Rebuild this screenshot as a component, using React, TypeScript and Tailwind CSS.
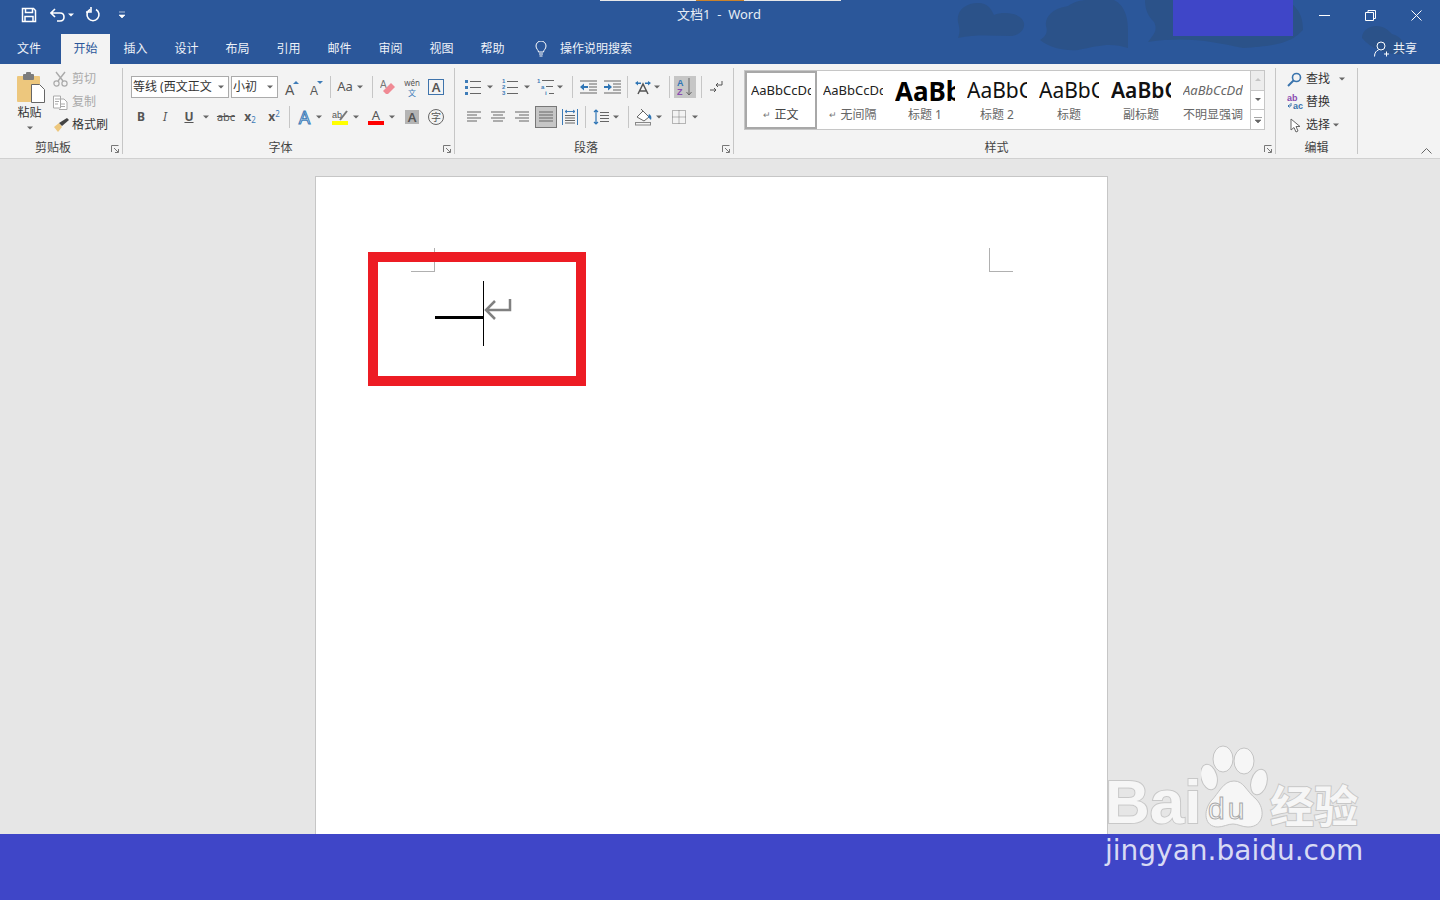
import type { ReactNode } from "react";

const BLUE = "#2b579a";

function Caret({ className = "", color = "#666" }: { className?: string; color?: string }) {
  return (
    <svg width="6" height="4" viewBox="0 0 6 4" className={`shrink-0 ${className}`}>
      <path d="M0 0.5h6L3 3.5z" fill={color} />
    </svg>
  );
}

function Sep({ className = "" }: { className?: string }) {
  return <div className={`h-[22px] w-px shrink-0 bg-[#c6c6c6] ${className}`} />;
}

function Slot({ children, className = "", w = "w-[24px]" }: { children: ReactNode; className?: string; w?: string }) {
  return <div className={`flex h-[22px] shrink-0 items-center justify-center ${w} ${className}`}>{children}</div>;
}

function Lines({ rows, w = 14 }: { rows: [number, number][]; w?: number }) {
  return (
    <svg width={w} height="13" viewBox={`0 0 ${w} 13`}>
      {rows.map(([x, len], i) => (
        <rect key={i} x={x} y={i * 3 + 0.5} width={len} height="1" fill="#666" />
      ))}
    </svg>
  );
}

function ListIcon({ kind }: { kind: "bullet" | "number" | "multi" }) {
  return (
    <svg width="18" height="20" viewBox="0 0 18 20">
      {kind === "bullet" && (
        <g fill="#3e7cb8">
          <rect x="1" y="3" width="3" height="3" />
          <rect x="1" y="9" width="3" height="3" />
          <rect x="1" y="15" width="3" height="3" />
        </g>
      )}
      {kind === "number" && (
        <g fill="#3e7cb8" fontSize="6" fontFamily="Liberation Sans, sans-serif" fontWeight="700">
          <text x="1" y="6">1</text>
          <text x="1" y="12">2</text>
          <text x="1" y="18">3</text>
        </g>
      )}
      {kind === "multi" && (
        <g fill="#3e7cb8" fontSize="6" fontFamily="Liberation Sans, sans-serif" fontWeight="700">
          <text x="0" y="6">1</text>
          <text x="4" y="12">a</text>
          <text x="8" y="18">i</text>
        </g>
      )}
      {kind === "multi" ? (
        <g fill="#666">
          <rect x="5" y="3" width="12" height="1" />
          <rect x="9" y="9" width="7" height="1" />
          <rect x="12" y="16" width="5" height="1" />
        </g>
      ) : (
        <g fill="#666">
          <rect x="6" y="4" width="11" height="1" />
          <rect x="6" y="10" width="11" height="1" />
          <rect x="6" y="16" width="11" height="1" />
        </g>
      )}
    </svg>
  );
}

function IndentIcon({ dir }: { dir: "out" | "in" }) {
  return (
    <svg width="17" height="14" viewBox="0 0 17 14">
      <g fill="#666">
        <rect x="0" y="0.5" width="17" height="1" />
        <rect x="9" y="3.5" width="8" height="1" />
        <rect x="9" y="6.5" width="8" height="1" />
        <rect x="9" y="9.5" width="8" height="1" />
        <rect x="0" y="12.5" width="17" height="1" />
      </g>
      <path d={dir === "out" ? "M0 7l4-3.5V6h4v2H4v2.5z" : "M8 7L4 3.5V6H0v2h4v2.5z"} fill="#2f75b5" />
    </svg>
  );
}

function Launcher() {
  return (
    <svg width="8" height="8" viewBox="0 0 8 8" className="absolute bottom-[1px] right-[3px]">
      <path d="M0.5 7V0.5H7.5M3 3l4 4M4 7.5h3.5V4" fill="none" stroke="#777" strokeWidth="1" />
    </svg>
  );
}

function Group({
  label,
  className,
  labelClass = "pr-[16px]",
  launcher = true,
  children,
}: {
  label: string;
  className: string;
  labelClass?: string;
  launcher?: boolean;
  children: ReactNode;
}) {
  return (
    <div className={`relative flex h-[86px] shrink-0 flex-col border-r border-[#c6c6c6] ${className}`}>
      <div className="h-[73px]">{children}</div>
      <div className={`h-[13px] text-center text-[12px] leading-[14px] text-[#444] ${labelClass}`}>{label}</div>
      {launcher && <Launcher />}
    </div>
  );
}

function Row({ children, className = "" }: { children: ReactNode; className?: string }) {
  return <div className={`flex h-[22px] items-center ${className}`}>{children}</div>;
}

function ClipboardGroup() {
  return (
    <Group label="剪贴板" className="w-[123px]">
      <div className="flex">
        <div className="ml-[15px] flex w-[29px] flex-col items-center">
          <svg width="29" height="31" viewBox="0 0 29 31" className="mt-[4px] translate-x-[1px]">
            <rect x="1" y="4" width="23" height="26" rx="1" fill="#edc77d" />
            <rect x="7" y="2" width="11" height="6" rx="1" fill="#7c7c7c" />
            <rect x="10" y="0" width="5" height="4" rx="1" fill="#7c7c7c" />
            <path d="M15.5 12.5h8l5 5v13h-13z" fill="#fff" stroke="#666" />
          </svg>
          <div className="mt-[2px] text-[12px] leading-[16px] text-[#333]">粘贴</div>
          <Caret className="mt-[5px]" />
        </div>
        <div className="ml-[9px] mt-[1px] flex flex-col gap-[3px] text-[12px] leading-[20px]">
          <div className="flex h-[20px] items-center text-[#aaa]">
            <svg width="15" height="16" viewBox="0 0 15 16" className="mr-[4px]">
              <path d="M3 1l7 9M12 1L5 10" stroke="#aaa" strokeWidth="1.4" fill="none" />
              <circle cx="3.5" cy="12.5" r="2.6" fill="none" stroke="#aaa" strokeWidth="1.2" />
              <circle cx="11.5" cy="12.5" r="2.6" fill="none" stroke="#aaa" strokeWidth="1.2" />
            </svg>
            剪切
          </div>
          <div className="flex h-[20px] items-center text-[#aaa]">
            <svg width="15" height="15" viewBox="0 0 15 15" className="mr-[4px]">
              <path d="M0.500 1h7v12h-7zM6 4h5l3 3v7.500H6" fill="#fff" stroke="#aaa" />
              <path d="M2 4h4M2 6.500h4M2 9h3M8 9h4M8 11.500h4" stroke="#aaa" />
            </svg>
            复制
          </div>
          <div className="flex h-[20px] items-center text-[#333]">
            <svg width="16" height="14" viewBox="0 0 16 14" className="mr-[3px]">
              <path d="M1 9l5-4 3 4-4 5z" fill="#edc77d" />
              <path d="M6 5l8-5 2 2-7 6z" fill="#444" />
            </svg>
            格式刷
          </div>
        </div>
      </div>
    </Group>
  );
}

function FontSelect({ className, text }: { className: string; text: string }) {
  return (
    <div className={`flex h-[22px] shrink-0 items-center justify-between border border-[#ababab] bg-white pl-[1px] pr-[4px] text-[12px] text-[#333] ${className}`}>
      <span className="whitespace-nowrap">{text}</span>
      <Caret className="ml-[2px]" />
    </div>
  );
}

function FontGroup() {
  return (
    <Group label="字体" className="w-[332px]">
      <Row className="mt-[8px] pl-[8px]">
        <FontSelect className="w-[98px]" text="等线 (西文正文" />
        <FontSelect className="ml-[2px] w-[47px]" text="小初" />
        <Slot className="ml-[2px]">
          <svg width="16" height="21" viewBox="0 0 16 21">
            <text x="1" y="18" fontSize="14" fill="#555" fontFamily="Liberation Sans, sans-serif">A</text>
            <path d="M9 7l3-3 3 3z" fill="#3e7cb8" />
          </svg>
        </Slot>
        <Slot>
          <svg width="16" height="21" viewBox="0 0 16 21">
            <text x="2" y="18" fontSize="12" fill="#555" fontFamily="Liberation Sans, sans-serif">A</text>
            <path d="M9 4h6l-3 3z" fill="#3e7cb8" />
          </svg>
        </Slot>
        <Sep className="ml-[2px]" />
        <Slot className="ml-[3px]" w="w-[22px]">
          <span className="text-[13px] text-[#555]">Aa</span>
        </Slot>
        <Caret className="ml-[1px]" />
        <Sep className="ml-[9px]" />
        <Slot className="ml-[3px]">
          <svg width="16" height="17" viewBox="0 0 16 17">
            <text x="0" y="9" fontSize="10" fill="#777" fontFamily="Liberation Sans, sans-serif">A</text>
            <path d="M3 12l8-8 4 4-7 7H6z" fill="#f08a94" />
          </svg>
        </Slot>
        <Slot>
          <div className="flex flex-col items-center gap-[1px]">
            <span className="text-[8px] leading-[9px] text-[#555]">wén</span>
            <span className="text-[8px] leading-[9px] text-[#3e7cb8]">文</span>
          </div>
        </Slot>
        <Slot>
          <div className="flex h-[16px] w-[16px] items-center justify-center border border-[#3f74ac] text-[13px] font-semibold leading-none text-[#555]">A</div>
        </Slot>
      </Row>
      <Row className="mt-[8px] pl-[6px]">
        <Slot><span className="text-[12px] font-bold text-[#555]">B</span></Slot>
        <Slot><span className="text-[12px] italic text-[#555]">I</span></Slot>
        <Slot><span className="text-[12px] font-bold leading-[12px] text-[#555] underline">U</span></Slot>
        <Caret className="ml-[2px]" />
        <Slot className="ml-[5px]">
          <span className="text-[11px] text-[#555] line-through">abc</span>
        </Slot>
        <Slot>
          <span className="text-[12px] font-bold text-[#555]">x<sub className="text-[8px] font-normal text-[#3e7cb8]">2</sub></span>
        </Slot>
        <Slot>
          <span className="text-[12px] font-bold text-[#555]">x<sup className="text-[8px] font-normal text-[#3e7cb8]">2</sup></span>
        </Slot>
        <Sep className="ml-[3px]" />
        <Slot className="ml-[3px]" w="w-[23px]">
          <span className="text-[18px] leading-none text-[#d6e6f5] [-webkit-text-stroke:1px_#3e7cb8]">A</span>
        </Slot>
        <Caret />
        <Slot className="ml-[6px]">
          <div className="flex flex-col items-center">
            <svg width="16" height="12" viewBox="0 0 16 12">
              <text x="0" y="9" fontSize="9" fill="#555" fontFamily="Liberation Sans, sans-serif">ab</text>
              <path d="M8 11l7-9" stroke="#777" strokeWidth="2" />
            </svg>
            <div className="h-[4px] w-[16px] bg-[#ffff00]" />
          </div>
        </Slot>
        <Caret className="ml-[1px]" />
        <Slot className="ml-[5px]">
          <div className="flex flex-col items-center">
            <span className="h-[12px] text-[13px] leading-[12px] text-[#555]">A</span>
            <div className="h-[4px] w-[16px] bg-[#ff0000]" />
          </div>
        </Slot>
        <Caret className="ml-[1px]" />
        <Slot className="ml-[5px]">
          <div className="flex h-[14px] w-[14px] items-center justify-center bg-[#b4b4b4] text-[13px] font-semibold leading-none text-[#555]">A</div>
        </Slot>
        <Slot>
          <div className="flex h-[16px] w-[16px] items-center justify-center rounded-full border border-[#666] text-[10px] leading-none text-[#555]">字</div>
        </Slot>
      </Row>
    </Group>
  );
}

function ParagraphGroup() {
  return (
    <Group label="段落" className="w-[279px]">
      <Row className="mt-[8px] pl-[6px]">
        <Slot><ListIcon kind="bullet" /></Slot>
        <Caret className="ml-[2px]" />
        <Slot className="ml-[5px]"><ListIcon kind="number" /></Slot>
        <Caret className="ml-[2px]" />
        <Slot className="ml-[4px]" w="w-[23px]"><ListIcon kind="multi" /></Slot>
        <Caret />
        <Sep className="ml-[9px]" />
        <Slot className="ml-[3px]"><IndentIcon dir="out" /></Slot>
        <Slot><IndentIcon dir="in" /></Slot>
        <Sep className="ml-[3px]" />
        <Slot className="ml-[3px]" w="w-[23px]">
          <svg width="16" height="15" viewBox="0 0 16 15">
            <path d="M0 3l3-2v1.500h3v1.500H3v1.500zM16 3l-3-2v1.500h-3v1.500h3v1.500z" fill="#2f75b5" />
            <path d="M3 14L8 4l5 10M5 11h6" fill="none" stroke="#555" strokeWidth="1.500" />
          </svg>
        </Slot>
        <Caret />
        <Sep className="ml-[9px]" />
        <Slot className="ml-[4px] bg-[#c6c6c6]" w="w-[22px]">
          <svg width="16" height="20" viewBox="0 0 16 20">
            <text x="0" y="9" fontSize="9" fontWeight="700" fill="#2f75b5" fontFamily="Liberation Sans, sans-serif">A</text>
            <text x="0" y="18" fontSize="9" fontWeight="700" fill="#8a4bb0" fontFamily="Liberation Sans, sans-serif">Z</text>
            <path d="M12 1v17M9.500 15l2.500 3 2.500-3" fill="none" stroke="#666" />
          </svg>
        </Slot>
        <Sep className="ml-[5px]" />
        <Slot className="ml-[2px]">
          <svg width="14" height="14" viewBox="0 0 14 14">
            <path d="M13 1v4H7M9 3L7 5l2 2" fill="none" stroke="#555" />
            <path d="M1 10h6M5 8l2 2-2 2" fill="none" stroke="#555" />
          </svg>
        </Slot>
      </Row>
      <Row className="mt-[8px] pl-[7px]">
        <Slot><Lines rows={[[0, 14], [0, 10], [0, 14], [0, 10]]} /></Slot>
        <Slot><Lines rows={[[0, 14], [2, 10], [0, 14], [2, 10]]} /></Slot>
        <Slot><Lines rows={[[0, 14], [4, 10], [0, 14], [4, 10]]} /></Slot>
        <Slot className="ml-px border border-[#777] bg-[#c6c6c6]" w="w-[22px]">
          <Lines rows={[[0, 14], [0, 14], [0, 14], [0, 14]]} />
        </Slot>
        <Slot className="ml-px">
          <svg width="16" height="16" viewBox="0 0 16 16">
            <path d="M0.500 0v16M15.500 0v16" stroke="#3e7cb8" />
            <path d="M3 2.500h10M3 2.500l2-1.500M3 2.500l2 1.500M13 2.500l-2-1.500M13 2.500l-2 1.500" stroke="#3e7cb8" fill="none" />
            <path d="M3 6.500h10M3 9h10M3 11.500h10M3 14h10" stroke="#666" />
          </svg>
        </Slot>
        <Sep className="ml-[3px]" />
        <Slot className="ml-[3px]">
          <svg width="16" height="16" viewBox="0 0 16 16">
            <path d="M3 1v14M1 3l2-2 2 2M1 13l2 2 2-2" fill="none" stroke="#2f75b5" strokeWidth="1.200" />
            <path d="M7 3.500h9M7 6.500h9M7 9.500h9M7 12.500h9" stroke="#666" />
          </svg>
        </Slot>
        <Caret />
        <Sep className="ml-[9px]" />
        <Slot className="ml-[3px]">
          <svg width="18" height="18" viewBox="0 0 18 18">
            <path d="M2 9l6-6 6 6-5 4z" fill="#fff" stroke="#666" />
            <path d="M6 1l2 2" stroke="#666" />
            <path d="M14 6c2 1 3 3 2 6-1-1-2-2-3-3z" fill="#2f75b5" />
            <rect x="0.500" y="14.500" width="15" height="2.500" fill="#f3f3f3" stroke="#888" />
          </svg>
        </Slot>
        <Caret />
        <Slot className="ml-[5px]">
          <svg width="14" height="14" viewBox="0 0 14 14">
            <path d="M0.500 0.500h13v13h-13zM7 0.500v13M0.500 7h13" fill="none" stroke="#777" strokeDasharray="1 1" />
          </svg>
        </Slot>
        <Caret className="ml-px" />
      </Row>
    </Group>
  );
}

function StyleCard({
  preview,
  label,
  selected = false,
  mark = false,
}: {
  preview: ReactNode;
  label: string;
  selected?: boolean;
  mark?: boolean;
}) {
  return (
    <div className={`flex h-[58px] w-[72px] shrink-0 flex-col items-center ${selected ? "border-2 border-[#a8a8a8]" : "border-2 border-transparent"}`}>
      <div className="flex h-[35px] w-[60px] items-center overflow-hidden whitespace-nowrap pt-[1px]">{preview}</div>
      <div className={`flex h-[14px] items-center text-[12px] ${selected ? "text-[#444]" : "text-[#666]"}`}>
        {mark && <span className="mr-[3px] text-[9px] text-[#777]">↵</span>}
        {label}
      </div>
    </div>
  );
}

function StylesGroup() {
  const scrollers = [
    <path key="up" d="M1 4h6L4 1z" fill="#c4c4c4" />,
    <path key="down" d="M1 1h6L4 4z" fill="#666" />,
    <path key="more" d="M0 0.500h8M1 3h6L4 6z" fill="#666" stroke="#666" strokeWidth="0.600" />,
  ];
  return (
    <Group label="样式" className="w-[542px]">
      <div className="ml-[10px] mt-[2px] flex h-[60px] w-[521px] border border-[#c6c6c6] bg-white">
        <StyleCard selected mark label="正文" preview={<span className="text-[13px] text-[#222]">AaBbCcDd</span>} />
        <StyleCard mark label="无间隔" preview={<span className="text-[13px] text-[#222]">AaBbCcDd</span>} />
        <StyleCard label="标题 1" preview={<span className="text-[26px] font-bold text-black">AaBbC</span>} />
        <StyleCard label="标题 2" preview={<span className="text-[21px] text-[#111]">AaBbC</span>} />
        <StyleCard label="标题" preview={<span className="text-[21px] text-[#111]">AaBbC</span>} />
        <StyleCard label="副标题" preview={<span className="text-[21px] font-semibold text-[#111]">AaBbC</span>} />
        <StyleCard label="不明显强调" preview={<span className="text-[13px] italic text-[#666]">AaBbCcDd</span>} />
        <div className="ml-auto flex w-[14px] flex-col border-l border-[#c6c6c6]">
          {scrollers.map((icon, i) => (
            <div
              key={i}
              className={`flex flex-1 items-center justify-center ${i < 2 ? "border-b border-[#c6c6c6]" : ""} ${i === 0 ? "bg-[#ededed]" : ""}`}
            >
              <svg width="8" height="6" viewBox="0 0 8 6">{icon}</svg>
            </div>
          ))}
        </div>
      </div>
    </Group>
  );
}

function EditGroup() {
  return (
    <Group label="编辑" className="w-[82px]" labelClass="" launcher={false}>
      <div className="ml-[11px] mt-[1px] flex flex-col gap-[3px] text-[12px] leading-[20px] text-[#333]">
        <div className="flex h-[20px] items-center">
          <svg width="15" height="15" viewBox="0 0 15 15" className="mr-[4px]">
            <circle cx="9.500" cy="5.500" r="4" fill="none" stroke="#3a74ad" strokeWidth="1.600" />
            <path d="M6.500 8.500L1 14" stroke="#3a74ad" strokeWidth="2" />
          </svg>
          查找
          <Caret className="ml-[9px]" />
        </div>
        <div className="flex h-[20px] items-center">
          <svg width="17" height="16" viewBox="0 0 17 16" className="mr-[2px]">
            <text x="0" y="7" fontSize="9" fontWeight="700" fill="#8a4bb0" fontFamily="Liberation Sans, sans-serif">ab</text>
            <text x="6" y="15" fontSize="9" fontWeight="700" fill="#3a74ad" fontFamily="Liberation Sans, sans-serif">ac</text>
            <path d="M4 9v3H1M2.500 10.500L1 12l1.500 1.500" fill="none" stroke="#3a74ad" />
          </svg>
          替换
        </div>
        <div className="flex h-[20px] items-center pl-[3px]">
          <svg width="11" height="15" viewBox="0 0 11 15" className="mr-[5px]">
            <path d="M1 1v11l3-2.500 2 4.500 2-1-2-4.500h4z" fill="#fff" stroke="#666" />
          </svg>
          选择
          <Caret className="ml-[3px]" />
        </div>
      </div>
    </Group>
  );
}

function TitleBarArt() {
  return (
    <svg width="1440" height="64" viewBox="0 0 1440 64" className="absolute left-0 top-0">
      <g fill="#2b5289">
        <path d="M958 38c2-6 2-8 0-16-2-12 8-19 20-19 10 0 13 6 16 12 10-4 28-2 30 8 1 8-6 12-12 13-18 0-36-2-54 2z" />
        <path d="M1040 40c6-4 8-8 6-14-1-12 10-18 22-20 6-4 12-6 20-6h26c12 6 14 20 14 30v18c-18-6-30-2-50 2-14 1-28-2-38-10z" />
        <path d="M1145 0h142c8 6 16 12 16 30-8 8-16 16-60 18-30-6-54-12-95-6 6-8 10-12 6-20-6-6-9-12-9-22z" />
        <path d="M1362 38c0-8 8-12 14-12 8 0 12 4 16 8 8 2 14 8 12 20-14 2-32-4-42-16z" />
      </g>
    </svg>
  );
}

function TitleBar() {
  return (
    <div className="relative h-[34px] shrink-0">
      <div className="absolute left-[600px] top-0 flex h-px w-[241px] bg-[#e8e8e8]">
        <div className="ml-[96px] h-px w-[48px] bg-[#c9822c]" />
      </div>
      <div className="absolute left-[1173px] top-0 h-[36px] w-[120px] bg-[#3f46c8]" />
      <div className="relative flex h-[30px] items-center text-white">
        <svg width="16" height="16" viewBox="0 0 16 16" className="ml-[21px]">
          <path d="M1.500 1.500h11l2 2v11h-13z" fill="none" stroke="#fff" strokeWidth="1.500" />
          <path d="M4.500 1.500v4h7v-4M4 14.500v-5h8v5" fill="none" stroke="#fff" strokeWidth="1.500" />
        </svg>
        <svg width="16" height="14" viewBox="0 0 16 14" className="ml-[13px]">
          <path d="M1 5h9c3 0 4 2 4 4s-1 4-4 4H7M5 1L1 5l4 4" fill="none" stroke="#fff" strokeWidth="1.600" />
        </svg>
        <Caret color="#fff" className="ml-[2px]" />
        <svg width="16" height="16" viewBox="0 0 16 16" className="ml-[11px]">
          <path d="M11 2.500a6 6 0 1 1-6 0M6 0v5H1" fill="none" stroke="#fff" strokeWidth="1.600" />
        </svg>
        <svg width="6" height="8" viewBox="0 0 6 8" className="ml-[18px]">
          <path d="M0 1h6M0 4h6L3 7z" fill="#fff" stroke="#fff" strokeWidth="0.600" />
        </svg>
        <div className="absolute left-[677px] top-[5px] whitespace-nowrap text-[13px] leading-[18px] text-[#e6ecf5]">文档1 &nbsp;-&nbsp; Word</div>
        <div className="absolute right-[0px] top-0 flex h-[30px] items-center">
          <svg width="11" height="11" viewBox="0 0 11 11" className="mr-[35px]"><path d="M0 5.500h11" stroke="#fff" /></svg>
          <svg width="11" height="11" viewBox="0 0 11 11" className="mr-[35px]">
            <path d="M0.500 2.500h8v8h-8zM3 2.500V0.500h7.500v8H8.500" fill="none" stroke="#fff" />
          </svg>
          <svg width="11" height="11" viewBox="0 0 11 11" className="mr-[18px]"><path d="M0.500 0.500l10 10M10.500 0.500l-10 10" stroke="#fff" /></svg>
        </div>
      </div>
    </div>
  );
}

function TabBar() {
  const tabs = ["插入", "设计", "布局", "引用", "邮件", "审阅", "视图", "帮助"];
  return (
    <div className="relative flex h-[30px] shrink-0 items-center text-[12px] text-[#eef2f8]">
      <div className="w-[58px] text-center">文件</div>
      <div className="ml-[3px] flex h-[30px] w-[49px] items-center justify-center bg-[#f3f3f3] text-[#2b579a]">开始</div>
      {tabs.map((t) => (
        <div key={t} className="w-[51px] text-center">{t}</div>
      ))}
      <svg width="14" height="16" viewBox="0 0 14 16" className="ml-[16px]">
        <path d="M4.500 11c0-2-2.500-3-2.500-6a5 5 0 0 1 10 0c0 3-2.500 4-2.500 6zM5 13h4M5.500 15h3" fill="none" stroke="#fff" />
      </svg>
      <div className="ml-[12px]">操作说明搜索</div>
      <div className="ml-auto mr-[23px] flex items-center">
        <svg width="15" height="16" viewBox="0 0 15 16" className="mr-[4px]">
          <circle cx="7" cy="5" r="4" fill="none" stroke="#fff" />
          <path d="M0.500 15.500c0-4 2-6 4-6.500M10 13h5M12.500 10.500v5" fill="none" stroke="#fff" />
        </svg>
        共享
      </div>
    </div>
  );
}

function Page() {
  return (
    <div className="relative ml-[315px] h-[700px] w-[793px] border border-[#c6c6c6] bg-white pl-[119px] pt-[104px]">
      {/* margin marks */}
      <div className="absolute left-[95px] top-[71px] h-[24px] w-[24px] border-b border-r border-[#b0b0b0]" />
      <div className="absolute left-[673px] top-[71px] h-[24px] w-[24px] border-b border-l border-[#b0b0b0]" />
      {/* annotation box */}
      <div className="absolute left-[52px] top-[75px] h-[134px] w-[218px] border-[10px] border-[#ed1c24]" />
      <div className="relative flex h-[65px] items-start">
        <div className="mt-[35px] h-[3px] w-[48px] bg-black" />
        <div className="h-[65px] w-px bg-black" />
        <svg width="28" height="24" viewBox="0 0 28 24" className="mt-[17px]">
          <path d="M26 1v11H2M11 3l-9 9 9 9" fill="none" stroke="#808080" strokeWidth="2.500" />
        </svg>
      </div>
    </div>
  );
}

function Watermark() {
  return (
    <div className="pointer-events-none absolute left-[1105px] top-[745px] h-[130px] w-[262px] [font-family:'DejaVu_Sans',sans-serif]">
      <span className="absolute left-[0px] top-[21px] text-[62px] font-bold leading-[72px] text-[#f6f6f6] [-webkit-text-stroke:2px_#c8c8c8] [paint-order:stroke_fill] [font-family:'Liberation_Sans',sans-serif]">Bai</span>
      <svg width="70" height="86" viewBox="0 0 70 86" className="absolute left-[96px] top-0">
        <g fill="#f6f6f6" stroke="#c4c4c4">
          <ellipse cx="22" cy="14" rx="10" ry="13" />
          <ellipse cx="43" cy="16" rx="10" ry="13" />
          <ellipse cx="8" cy="32" rx="8" ry="13" transform="rotate(-15 8 32)" />
          <ellipse cx="58" cy="37" rx="8" ry="13" transform="rotate(15 58 37)" />
          <path d="M33 36c10 0 12 10 22 18 10 10 8 28-8 28-6 0-10-3-15-3s-10 3-15 3C3 82 2 66 10 56c8-8 12-20 23-20z" />
        </g>
      </svg>
      <span className="absolute left-[103px] top-[46px] text-[30px] leading-[36px] tracking-[3px] text-[#f6f6f6] [-webkit-text-stroke:1px_#a8a8a8] [font-family:'Liberation_Sans',sans-serif]">du</span>
      <span className="absolute left-[165px] top-[34px] whitespace-nowrap text-[44px] font-bold leading-[50px] text-[#f6f6f6] [-webkit-text-stroke:2px_#c8c8c8] [paint-order:stroke_fill] [font-family:'Noto_Sans_CJK_SC',sans-serif]">经验</span>
      <span className="absolute left-0 top-[88px] whitespace-nowrap text-[28px] leading-[36px] text-[#d8daf4]">jingyan.baidu.com</span>
    </div>
  );
}

export default function App() {
  return (
    <div className="relative flex h-[900px] w-[1440px] flex-col overflow-hidden bg-[#e6e6e6] [font-family:'Noto_Sans','Noto_Sans_CJK_SC',sans-serif]">
      <div className="relative shrink-0" style={{ backgroundColor: BLUE }}>
        <TitleBarArt />
        <TitleBar />
        <TabBar />
      </div>

      <div className="relative flex h-[95px] shrink-0 border-b border-[#d0d0d0] bg-[#f3f3f3] pt-[4px]">
        <ClipboardGroup />
        <FontGroup />
        <ParagraphGroup />
        <StylesGroup />
        <EditGroup />
        <svg width="11" height="6" viewBox="0 0 11 6" className="absolute bottom-[4px] right-[8px]">
          <path d="M0.500 5.500l5-5 5 5" fill="none" stroke="#666" />
        </svg>
      </div>

      <div className="min-h-0 flex-1 overflow-hidden pt-[17px]">
        <Page />
      </div>

      <div className="h-[66px] shrink-0 bg-[#3f46c8]" />
      <Watermark />
    </div>
  );
}
